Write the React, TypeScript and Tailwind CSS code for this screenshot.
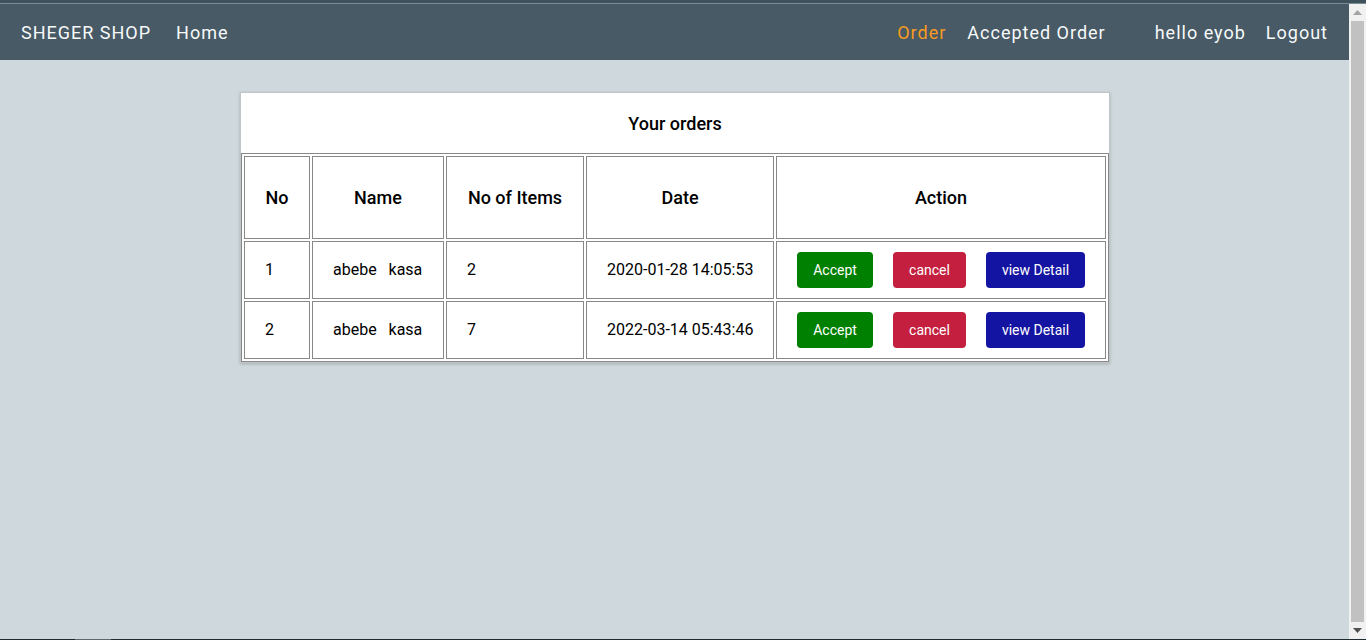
import React from "react";

const rows = [
  { no: 1, name: "abebe\u00a0\u00a0\u00a0kasa", items: 2, date: "2020-01-28 14:05:53" },
  { no: 2, name: "abebe\u00a0\u00a0\u00a0kasa", items: 7, date: "2022-03-14 05:43:46" },
];

export default function App() {
  return (
    <div className="h-[640px] w-[1366px] flex flex-col overflow-hidden font-['Roboto',sans-serif]">
      <div className="h-[3px] bg-[#3f525c] shrink-0" />
      <div className="h-px bg-[#7b8b94] shrink-0" />
      <div className="flex flex-1 min-h-0">
        <div className="flex-1 bg-[#cfd8dc] flex flex-col">
          <nav className="h-[56px] bg-[#475a65] flex items-center px-[21px] text-[18px] tracking-[1px] text-[#f7f9fa]">
            <div className="flex items-center gap-[25px]">
              <span>SHEGER SHOP</span>
              <span>Home</span>
            </div>
            <div className="ml-auto flex items-center gap-[21px]">
              <span className="text-[#f89a1f]">Order</span>
              <span>Accepted Order</span>
            </div>
            <div className="ml-[49px] flex items-center gap-[20px]">
              <span>hello eyob</span>
              <span>Logout</span>
            </div>
          </nav>
          <main className="flex pt-8 pl-[240px]">
            <div className="w-[870px] bg-white border border-[#bfc6ca] shadow-[0_1px_3px_rgba(0,0,0,0.2)]">
              <div className="h-[60px] flex items-center justify-center text-[18px] font-medium text-black">
                Your orders
              </div>
              <table className="w-full table-fixed border border-[#888] border-separate border-spacing-[2px] text-black">
                <colgroup>
                  <col className="w-[66px]" />
                  <col className="w-[132px]" />
                  <col className="w-[138px]" />
                  <col className="w-[188px]" />
                  <col className="w-[330px]" />
                </colgroup>
                <thead>
                  <tr>
                    {["No", "Name", "No of Items", "Date", "Action"].map((h) => (
                      <th
                        key={h}
                        className="h-[83px] border border-[#888] text-[18px] font-medium text-center align-middle p-0"
                      >
                        {h}
                      </th>
                    ))}
                  </tr>
                </thead>
                <tbody className="text-[16px]">
                  {rows.map((r) => (
                    <tr key={r.no}>
                      <td className="h-[58px] border border-[#888] pl-[20px] align-middle">{r.no}</td>
                      <td className="h-[58px] border border-[#888] pl-[20px] align-middle whitespace-nowrap">{r.name}</td>
                      <td className="h-[58px] border border-[#888] pl-[20px] align-middle">{r.items}</td>
                      <td className="h-[58px] border border-[#888] pl-[20px] align-middle whitespace-nowrap">{r.date}</td>
                      <td className="h-[58px] border border-[#888] pl-[20px] align-middle">
                        <div className="flex items-center gap-[20px] text-[14px] leading-none text-white">
                          <button className="w-[76px] h-9 rounded-[4px] bg-[#008000]">Accept</button>
                          <button className="w-[73px] h-9 rounded-[4px] bg-[#c41f3e]">cancel</button>
                          <button className="w-[99px] h-9 rounded-[4px] bg-[#1414a2]">view Detail</button>
                        </div>
                      </td>
                    </tr>
                  ))}
                </tbody>
              </table>
            </div>
          </main>
        </div>
        <div className="w-[17px] bg-[#f1f1f1] flex flex-col items-center">
          <div className="h-[17px] flex items-center justify-center">
            <svg width="9" height="5" viewBox="0 0 9 5">
              <polygon points="0,5 9,5 4.5,0" fill="#a3a3a3" />
            </svg>
          </div>
          <div className="flex-1 w-[13px] bg-[#c1c1c1]" />
          <div className="h-[17px] flex items-center justify-center">
            <svg width="9" height="5" viewBox="0 0 9 5">
              <polygon points="0,0 9,0 4.5,5" fill="#505050" />
            </svg>
          </div>
        </div>
      </div>
      <div className="h-px bg-[#1f2b31] shrink-0 flex">
        <div className="ml-[75px] w-[36px] bg-[#5d686e]" />
      </div>
    </div>
  );
}
